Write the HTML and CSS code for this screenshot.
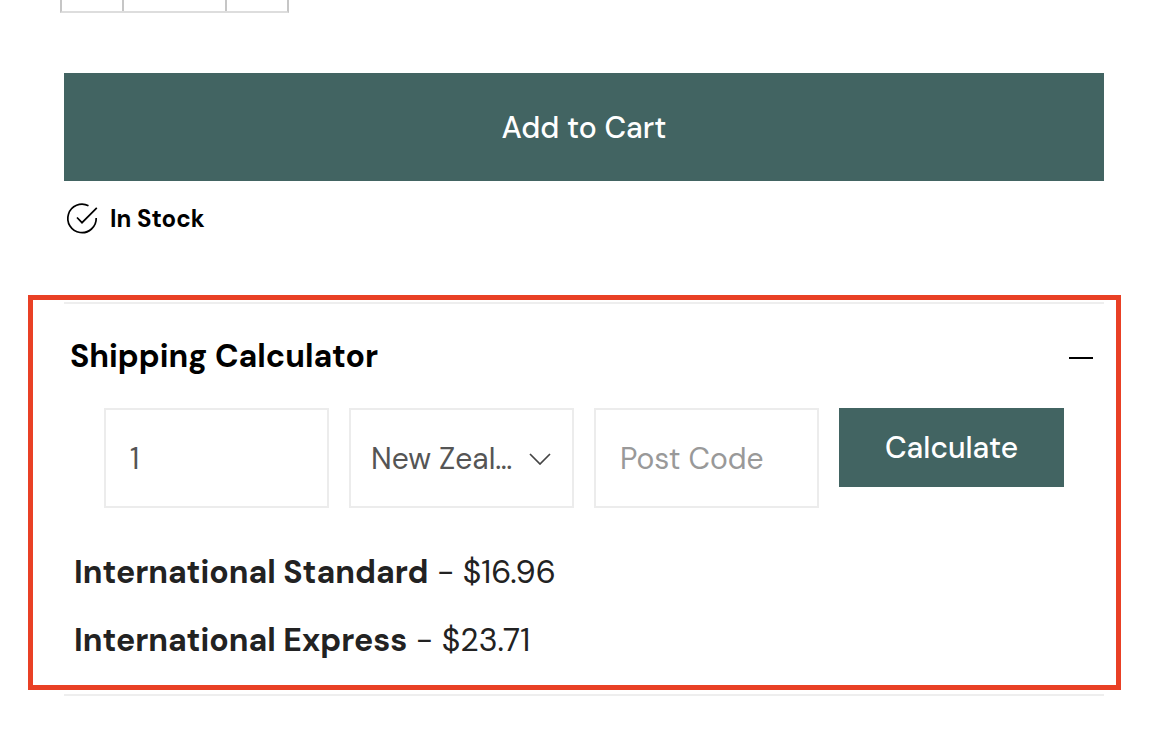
FILE: index.html
```html
<!DOCTYPE html>
<html lang="en">
<head>
  <meta charset="UTF-8">
  <meta name="viewport" content="width=device-width, initial-scale=1.0">
  <title>Shipping Calculator</title>
  <link rel="stylesheet" href="styles.css">
</head>
<body>

  <main class="product">
    <div class="quantity">
      <button type="button" class="quantity-minus" aria-label="Decrease quantity"></button>
      <span class="quantity-value"></span>
      <button type="button" class="quantity-plus" aria-label="Increase quantity"></button>
    </div>

    <button type="button" class="button add-to-cart">Add to Cart</button>

    <div class="stock">
      <svg class="stock-icon" viewBox="0 0 36 36" aria-hidden="true">
        <path d="M24.5 5.8A14.2 14.2 0 1 0 32.2 18"/>
        <path d="M13 17.5L18 22.7L32.8 7.8"/>
      </svg>
      <span>In Stock</span>
    </div>

    <details class="accordion" open>
      <summary class="accordion-title">
        <span>Shipping Calculator</span>
        <svg class="accordion-icon" viewBox="0 0 24 24" aria-hidden="true">
          <path d="M0 14H24"/>
        </svg>
      </summary>

      <form class="calculator">
        <input class="field" type="text" value="1" aria-label="Quantity">
        <div class="select">
          <select class="field" aria-label="Country">
            <option>New Zealand</option>
          </select>
          <svg class="select-arrow" viewBox="0 0 22 12" aria-hidden="true">
            <path d="M1 1L11 11L21 1"/>
          </svg>
        </div>
        <input class="field" type="text" placeholder="Post Code" aria-label="Post Code">
        <button type="button" class="button calculate">Calculate</button>
      </form>

      <div class="rates">
        <p><strong>International Standard</strong> - $16.96</p>
        <p><strong>International Express</strong> - $23.71</p>
      </div>

      <div class="highlight"></div>
    </details>
  </main>

</body>
</html>
```

FILE: styles.css
```css
* {
  box-sizing: border-box;
}

body {
  margin: 0;
  background: #fff;
  color: #000;
  font-family: "DM Sans", Inter, "Liberation Sans", sans-serif;
  font-size: 30px;
}

button, input, select {
  font: inherit;
  border-radius: 0;
}

.product {
  padding: 0 54px 34px 64px;
}

/* Quantity stepper */
.quantity {
  display: grid;
  grid-template-columns: 60px 105px 60px;
  width: fit-content;
  height: 13px;
  margin: 0 0 60px -4px;
  border: 2px solid #c6c6c6;
  border-top: 0;
  border-bottom-color: #ddd;
}

.quantity button {
  padding: 0;
  border: 0;
  background: none;
}

.quantity-value {
  border: solid #c6c6c6;
  border-width: 0 2px;
}

.button {
  display: block;
  width: 100%;
  padding: 0;
  border: 0;
  background: #426462;
  color: #fff;
  font-weight: 500;
  cursor: pointer;
}

.add-to-cart {
  height: 108px;
}

.stock {
  display: flex;
  align-items: center;
  gap: 10px;
  height: 36px;
  margin: 19px 0 66px;
  font-size: 24px;
  font-weight: 700;
}

.stock-icon {
  width: 36px;
  height: 36px;
}

svg {
  fill: none;
  stroke: #000;
  stroke-width: 2;
}

.stock-icon,
.select-arrow {
  stroke-width: 1.7;
}

/* Shipping accordion */
.accordion {
  position: relative;
  border: solid #eee;
  border-width: 2px 0;
}

.accordion-title {
  display: flex;
  align-items: center;
  justify-content: space-between;
  height: 104px;
  padding: 0 11px 0 6px;
  font-size: 32px;
  font-weight: 700;
  cursor: pointer;
  list-style: none;
}

.accordion-icon {
  width: 24px;
  height: 24px;
}

.calculator {
  display: grid;
  grid-template-columns: repeat(4, 1fr);
  gap: 20px;
  align-items: start;
  padding: 0 40px;
}

.field {
  width: 100%;
  height: 100px;
  padding: 0 24px;
  border: 2px solid #ececec;
  background: #fff;
  color: #555;
}

.field::placeholder {
  color: #999;
  opacity: 1;
}

.select {
  position: relative;
}

.select .field {
  padding: 0 58px 0 20px;
  appearance: none;
  text-overflow: ellipsis;
}

.select-arrow {
  position: absolute;
  top: 45px;
  right: 23px;
  width: 22px;
  height: 12px;
  stroke: #444;
  pointer-events: none;
}

.calculate {
  height: 79px;
}

.rates {
  padding: 30px 10px 20px;
  color: #222;
  font-size: 32px;
}

.rates p {
  margin: 0;
  line-height: 68px;
}

.highlight {
  position: absolute;
  top: -9px;
  right: -17px;
  bottom: 4px;
  left: -36px;
  border: 5px solid #e94025;
  pointer-events: none;
}
```
